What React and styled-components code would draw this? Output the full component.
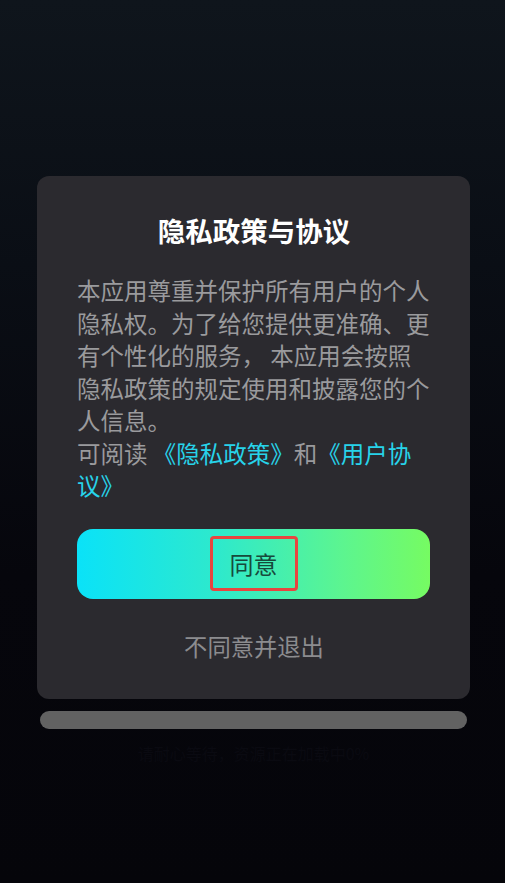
import React from "react";
import styled, { createGlobalStyle } from "styled-components";

const Global = createGlobalStyle`
  html, body { margin: 0; padding: 0; background: #05050a; }
  * { box-sizing: border-box; }
`;

const Page = styled.div`
  min-height: 883px;
  width: 505px;
  padding: 176px 35px 0 37px;
  display: flex;
  flex-direction: column;
  font-family: "Noto Sans CJK SC", "Noto Sans", sans-serif;
  background: linear-gradient(180deg, #0f151c 0%, #0a0e15 30%, #06060c 65%, #05050a 100%);
`;

const Card = styled.div`
  width: 433px;
  background: #2b2a2f;
  border-radius: 12px;
  padding: 35px 39px 37px 40px;
  display: flex;
  flex-direction: column;
`;

const Title = styled.h1`
  margin: 0;
  font-size: 27.5px;
  line-height: 38px;
  font-weight: 700;
  color: #ffffff;
  text-align: center;
`;

const Body = styled.p`
  margin: 25px 0 0;
  font-size: 23.5px;
  line-height: 32.5px;
  color: #9a9a9d;
  word-break: break-all;
`;

const Link = styled.span`
  color: #27d3ea;
`;

const AgreeButton = styled.button`
  margin-top: 27px;
  height: 70px;
  width: 353px;
  border: none;
  border-radius: 16px;
  background: linear-gradient(90deg, #0ae2f8 0%, #2ee9cc 40%, #5cf590 75%, #76fb62 100%);
  display: flex;
  align-items: center;
  justify-content: center;
  padding: 0;
  cursor: pointer;
  font-family: inherit;
`;

const AgreeLabel = styled.span`
  display: inline-flex;
  align-items: center;
  justify-content: center;
  width: 88px;
  height: 55px;
  border: 3px solid #e8453f;
  border-radius: 4px;
  font-size: 24px;
  line-height: 1;
  color: #174a3c;
`;

const Decline = styled.div`
  margin-top: 31px;
  text-align: center;
  font-size: 23.3px;
  line-height: 32px;
  color: #8c8c8f;
`;

const Progress = styled.div`
  margin: 12px 0 0 3px;
  width: 427px;
  height: 18px;
  border-radius: 9px;
  background: #626262;
`;

const Hint = styled.div`
  margin-top: 13px;
  width: 433px;
  text-align: center;
  font-size: 16px;
  line-height: 22px;
  color: #0a0a11;
`;

export default function App() {
  return (
    <>
      <Global />
      <Page>
        <Card>
          <Title>隐私政策与协议</Title>
          <Body>
            本应用尊重并保护所有用户的个人隐私权。为了给您提供更准确、更有个性化的服务， 本应用会按照隐私政策的规定使用和披露您的个人信息。
            <br />
            可阅读 <Link>《隐私政策》</Link>和<Link>《用户协议》</Link>
          </Body>
          <AgreeButton>
            <AgreeLabel>同意</AgreeLabel>
          </AgreeButton>
          <Decline>不同意并退出</Decline>
        </Card>
        <Progress />
        <Hint>请耐心等待，资源正在加载中0%</Hint>
      </Page>
    </>
  );
}
